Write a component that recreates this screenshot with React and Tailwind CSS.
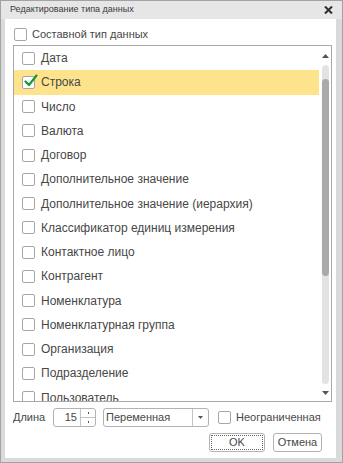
import React from "react";

const items = [
  "Дата",
  "Строка",
  "Число",
  "Валюта",
  "Договор",
  "Дополнительное значение",
  "Дополнительное значение (иерархия)",
  "Классификатор единиц измерения",
  "Контактное лицо",
  "Контрагент",
  "Номенклатура",
  "Номенклатурная группа",
  "Организация",
  "Подразделение",
  "Пользователь",
];

function Box({ checked }) {
  return (
    <div className="relative w-[13px] h-[13px] shrink-0 rounded-[2px] border border-[#a6a6a6] bg-white">
      {checked && (
        <svg className="absolute left-[1px] top-[-3px]" width="14" height="14" viewBox="0 0 14 14">
          <path d="M1.5 7.5 L5 11 L12.5 1.5" fill="none" stroke="#17973a" strokeWidth="2.2" strokeLinecap="round" strokeLinejoin="round" />
        </svg>
      )}
    </div>
  );
}

export default function App() {
  return (
    <div className="w-[343px] h-[463px] bg-[#a3a3a3] p-[1px] text-[#474747] overflow-hidden font-['Liberation_Sans',Arial,sans-serif]">
      <div className="h-full flex flex-col bg-[#dadada]">
        <div className="h-[18px] flex items-center justify-between pl-[9px] pr-[9px] bg-[#e6e6e6] shrink-0">
          <span className="text-[9px] text-[#3a3a3a]">Редактирование типа данных</span>
          <svg width="9" height="8" viewBox="0 0 9 8">
            <path d="M1 0.5 L8 7.5 M8 0.5 L1 7.5" stroke="#2d2d2d" strokeWidth="2" />
          </svg>
        </div>
        <div className="flex-1 ml-[4px] mr-[6px] mb-[4px] bg-white flex flex-col pl-[8px] pr-[4px]">
          <div className="h-[26px] pt-[4px] flex items-center gap-[5px] pl-[1px] shrink-0">
            <Box />
            <span className="text-[11px]">Составной тип данных</span>
          </div>
          <div className="h-[357px] shrink-0 border border-[#a9a9a9] overflow-hidden flex">
            <div className="flex-1 flex flex-col">
              {items.map((t, i) => (
                <div
                  key={t}
                  className={
                    "h-[24.25px] shrink-0 flex items-center gap-[6px] pl-[8px] text-[12px] " +
                    (i === 1 ? "bg-[#fde38b]" : "")
                  }
                >
                  <Box checked={i === 1} />
                  <span className="leading-none whitespace-nowrap">{t}</span>
                </div>
              ))}
            </div>
            <div className="w-[12px] shrink-0 flex flex-col items-center pt-[8px] pb-[6px]">
              <svg width="7" height="4" viewBox="0 0 7 4" className="shrink-0">
                <path d="M0 4 L3.5 0 L7 4 Z" fill="#555" />
              </svg>
              <div className="mt-[7px] w-[7px] h-[319px] shrink-0 rounded-[4px] bg-[#e3e3e3] pt-[14px]">
                <div className="w-[7px] h-[197px] rounded-[4px] bg-[#aaaaaa]" />
              </div>
              <div className="flex-1" />
              <svg width="7" height="4" viewBox="0 0 7 4" className="shrink-0">
                <path d="M0 0 L3.5 4 L7 0 Z" fill="#555" />
              </svg>
            </div>
          </div>
          <div className="h-[31px] shrink-0 flex items-center text-[11px]">
            <span className="w-[40px]">Длина</span>
            <div className="w-[43px] h-[19px] border border-[#b3b3b3] rounded-[3px] flex">
              <span className="flex-1 text-right pr-[3px] leading-[17px]">15</span>
              <div className="w-[15px] border-l border-[#c3c3c3] flex flex-col">
                <div className="flex-1 flex items-center justify-center border-b border-[#c3c3c3]">
                  <div className="w-[1px] h-[2px] bg-[#555]" />
                </div>
                <div className="flex-1 flex items-center justify-center">
                  <div className="w-[1px] h-[2px] bg-[#555]" />
                </div>
              </div>
            </div>
            <div className="ml-[7px] w-[106px] h-[19px] border border-[#b3b3b3] rounded-[3px] flex">
              <span className="flex-1 pl-[2px] leading-[17px]">Переменная</span>
              <div className="w-[16px] border-l border-[#c3c3c3] flex items-center justify-center">
                <svg width="5" height="3" viewBox="0 0 5 3">
                  <path d="M0 0 L5 0 L2.5 3 Z" fill="#555" />
                </svg>
              </div>
            </div>
            <div className="ml-[9px] flex items-center gap-[5px]">
              <Box />
              <span>Неограниченная</span>
            </div>
          </div>
          <div className="flex justify-end gap-[8px] mr-[10px] text-[11px]">
            <div className="w-[56px] h-[19px] border border-[#b3b3b3] rounded-[3px] p-[1px]">
              <div className="h-full border border-dotted border-[#666] flex items-center justify-center leading-none">OK</div>
            </div>
            <div className="w-[49px] h-[19px] border border-[#b3b3b3] rounded-[3px] flex items-center justify-center leading-none">Отмена</div>
          </div>
        </div>
      </div>
    </div>
  );
}
